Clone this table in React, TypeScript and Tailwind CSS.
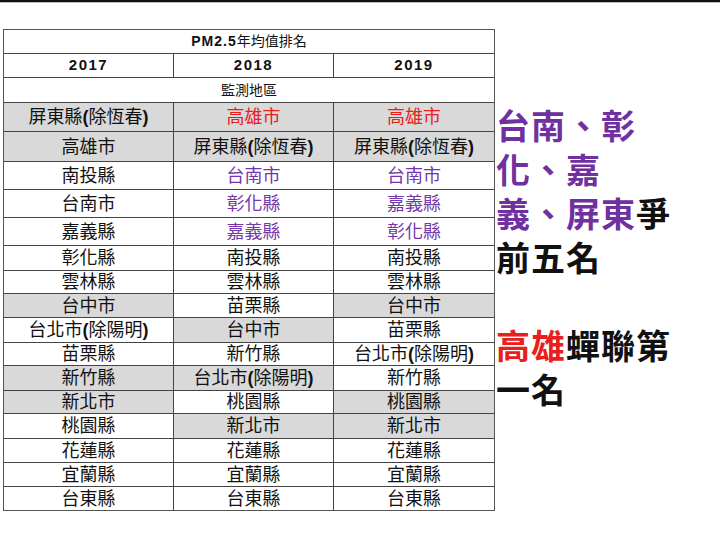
import React from "react";

type Cell = { t: string; c?: "red" | "purple"; g?: boolean };

const rows: { h: number; cells: Cell[] }[] = [
  { h: 29, cells: [{ t: "屏東縣(除恆春)", g: true }, { t: "高雄市", c: "red", g: true }, { t: "高雄市", c: "red", g: true }] },
  { h: 30, cells: [{ t: "高雄市", g: true }, { t: "屏東縣(除恆春)", g: true }, { t: "屏東縣(除恆春)", g: true }] },
  { h: 28, cells: [{ t: "南投縣" }, { t: "台南市", c: "purple" }, { t: "台南市", c: "purple" }] },
  { h: 28, cells: [{ t: "台南市" }, { t: "彰化縣", c: "purple" }, { t: "嘉義縣", c: "purple" }] },
  { h: 28, cells: [{ t: "嘉義縣" }, { t: "嘉義縣", c: "purple" }, { t: "彰化縣", c: "purple" }] },
  { h: 25, cells: [{ t: "彰化縣" }, { t: "南投縣" }, { t: "南投縣" }] },
  { h: 23, cells: [{ t: "雲林縣" }, { t: "雲林縣" }, { t: "雲林縣" }] },
  { h: 24, cells: [{ t: "台中市", g: true }, { t: "苗栗縣" }, { t: "台中市", g: true }] },
  { h: 25, cells: [{ t: "台北市(除陽明)" }, { t: "台中市", g: true }, { t: "苗栗縣" }] },
  { h: 23, cells: [{ t: "苗栗縣" }, { t: "新竹縣" }, { t: "台北市(除陽明)" }] },
  { h: 25, cells: [{ t: "新竹縣", g: true }, { t: "台北市(除陽明)", g: true }, { t: "新竹縣" }] },
  { h: 23, cells: [{ t: "新北市", g: true }, { t: "桃園縣" }, { t: "桃園縣", g: true }] },
  { h: 25, cells: [{ t: "桃園縣" }, { t: "新北市", g: true }, { t: "新北市", g: true }] },
  { h: 24, cells: [{ t: "花蓮縣" }, { t: "花蓮縣" }, { t: "花蓮縣" }] },
  { h: 24, cells: [{ t: "宜蘭縣" }, { t: "宜蘭縣" }, { t: "宜蘭縣" }] },
  { h: 23, cells: [{ t: "台東縣" }, { t: "台東縣" }, { t: "台東縣" }] },
];

const font = { fontFamily: '"Liberation Sans", "Noto Sans CJK TC", sans-serif' };

function renderText(t: string) {
  const m = t.match(/^(.*)\((.*)\)$/);
  if (!m) return t;
  return (
    <>
      {m[1]}
      <span className="font-bold">(</span>
      {m[2]}
      <span className="font-bold">)</span>
    </>
  );
}

function CellView({ cell, idx }: { cell: Cell; idx: number }) {
  const color =
    cell.c === "red" ? "text-[#e8201c]" : cell.c === "purple" ? "text-[#7436a8]" : "text-[#111]";
  const bg = cell.g ? "bg-[#d9d9d9]" : "bg-white";
  const w = idx === 0 ? "w-[170px]" : "w-[160px]";
  const br = idx < 2 ? "border-r border-r-[#444]" : "";
  return (
    <div className={`${w} ${bg} ${color} ${br} flex items-center justify-center text-[18px] leading-none`}>
      {renderText(cell.t)}
    </div>
  );
}

export default function App() {
  return (
    <div className="w-[720px] h-[536px] bg-white overflow-hidden relative" style={font}>
      <div className="h-[2px] bg-[#111]" />
      <div className="h-[1px] bg-[#bbb]" />
      <div className="flex pt-[26px]">
        <div className="ml-[3px] w-[492px] border-[1.5px] border-[#555] flex flex-col">
          <div className="h-[24px] border-b border-b-[#444] flex items-center justify-center text-[14px] text-[#111]">
            <span className="font-bold tracking-[1px]">PM2.5</span>
            <span>年均值排名</span>
          </div>
          <div className="h-[24px] border-b border-b-[#444] flex text-[15px] font-bold text-[#111] tracking-[1.5px]">
            <div className="w-[170px] border-r border-r-[#444] flex items-center justify-center">2017</div>
            <div className="w-[160px] border-r border-r-[#444] flex items-center justify-center">2018</div>
            <div className="w-[160px] flex items-center justify-center">2019</div>
          </div>
          <div className="h-[25px] border-b border-b-[#444] flex items-center justify-center text-[14px] text-[#111]">
            監測地區
          </div>
          {rows.map((r, i) => (
            <div
              key={i}
              className={`flex ${i < rows.length - 1 ? "border-b border-b-[#444]" : ""}`}
              style={{ height: r.h }}
            >
              {r.cells.map((c, j) => (
                <CellView key={j} cell={c} idx={j} />
              ))}
            </div>
          ))}
        </div>
        <div className="ml-[1px] mt-[76px] text-[34px] leading-[44px] font-bold text-[#111] tracking-[1px]">
          <div className="text-[#7030a0]">台南、彰</div>
          <div className="text-[#7030a0]">化、嘉</div>
          <div>
            <span className="text-[#7030a0]">義、屏東</span>爭
          </div>
          <div>前五名</div>
          <div className="h-[44px]" />
          <div>
            <span className="text-[#e8201c]">高雄</span>蟬聯第
          </div>
          <div>一名</div>
        </div>
      </div>
    </div>
  );
}
